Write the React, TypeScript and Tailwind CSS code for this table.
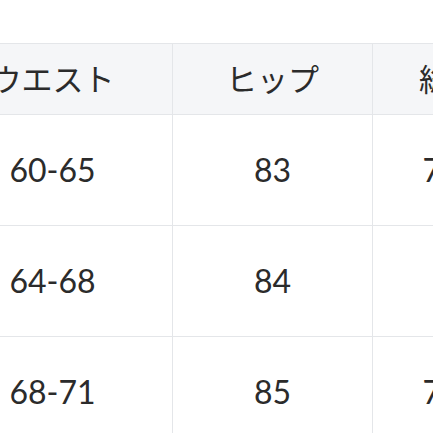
const header = ['ウエスト', 'ヒップ', '総着丈'];

const rows = [
    ['60-65', '83', '70-74'],
    ['64-68', '84', '72'],
    ['68-71', '85', '73-77'],
];

export default function App() {
    return (
        <div
            className="w-[433px] h-[433px] overflow-hidden bg-white pt-[43px]"
            style={{ fontFamily: 'Lato, "Noto Sans CJK JP", sans-serif' }}
        >
            <table className="ml-[-68px] w-[626px] min-w-[626px] border-collapse text-[#2b2b2b] table-fixed">
                <colgroup>
                    <col className="w-[240px]" />
                    <col className="w-[200px]" />
                    <col className="w-[186px]" />
                </colgroup>
                <thead>
                    <tr className="h-[71px] bg-[#f5f6f8]">
                        {header.map((h) => (
                            <th
                                key={h}
                                className="border border-[#e4e6e9] text-center text-[31px] font-normal align-middle"
                            >
                                {h}
                            </th>
                        ))}
                    </tr>
                </thead>
                <tbody>
                    {rows.map((r) => (
                        <tr key={r[0]} className="h-[111px]">
                            {r.map((c, i) => (
                                <td
                                    key={i}
                                    className="border border-[#e4e6e9] text-center text-[32px] align-middle"
                                >
                                    {c}
                                </td>
                            ))}
                        </tr>
                    ))}
                </tbody>
            </table>
        </div>
    );
}
